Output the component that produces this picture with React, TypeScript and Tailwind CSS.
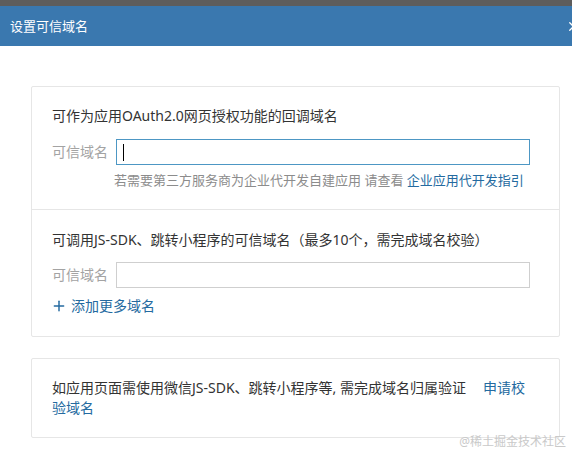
import React from "react";
import { Plus, X } from "lucide-react";

const font = { fontFamily: '"Noto Sans", "Noto Sans CJK SC", sans-serif' };

const DomainRow = ({ focused }: { focused?: boolean }) => {
  return (
    <div className="flex items-center">
      <span className="w-[64px] shrink-0 text-[14px] leading-[20px] text-[#a3a3a3]">可信域名</span>
      <div
        className={`flex h-[26px] w-[414px] items-center border bg-white pl-[6px] ${
          focused ? "border-[#4d97c4]" : "border-[#cfcfcf]"
        }`}
      >
        {focused && <div className="h-[17px] w-[1px] bg-black" />}
      </div>
    </div>
  );
};

export default function App() {
  return (
    <div className="relative h-[452px] w-[572px] overflow-hidden bg-white text-[#333]" style={font}>
      <div className="h-[6px] bg-[#5e5d5c]" />
      <div className="flex h-[40px] items-center bg-[#3a78af] pl-[10px] text-white">
        <span className="text-[13px] leading-[20px]">设置可信域名</span>
        <X size={15} strokeWidth={2} className="ml-auto mr-[-9px] shrink-0" />
      </div>

      <div className="px-[31px] pt-[40px]">
        <div className="w-[529px] rounded-[2px] border border-[#e6e6e6] bg-white">
          <div className="pl-[20px] pt-[19px] pb-[19px]">
            <p className="text-[14px] leading-[20px]">可作为应用OAuth2.0网页授权功能的回调域名</p>
            <div className="mt-[13px]">
              <DomainRow focused />
            </div>
            <p className="mt-[5px] ml-[62px] text-[13px] leading-[20px] text-[#8c8c8c]">
              若需要第三方服务商为企业代开发自建应用 请查看{" "}
              <a className="text-[#246aa0]">企业应用代开发指引</a>
            </p>
          </div>

          <div className="border-t border-[#e6e6e6] pl-[20px] pt-[20px] pb-[20px]">
            <p className="text-[14px] leading-[20px]">
              可调用JS-SDK、跳转小程序的可信域名（最多10个，需完成域名校验）
            </p>
            <div className="mt-[12px]">
              <DomainRow />
            </div>
            <div className="mt-[8px] flex items-center gap-[4px] text-[14px] leading-[20px] text-[#246aa0]">
              <Plus size={16} strokeWidth={2.2} className="-ml-[1px]" />
              <span>添加更多域名</span>
            </div>
          </div>
        </div>

        <div className="mt-[21px] w-[529px] rounded-[2px] border border-[#e6e6e6] bg-white pl-[20px] pt-[19px] pb-[19px]">
          <p className="text-[14px] leading-[20px]">
            如应用页面需使用微信JS-SDK、跳转小程序等, 需完成域名归属验证
            <a className="ml-[17px] text-[#246aa0]">
              申请校
              <br />
              验域名
            </a>
          </p>
        </div>
      </div>

      <span className="absolute right-[6px] bottom-[2px] text-[12px] leading-[16px] text-[#c9c9c9]">
        @稀土掘金技术社区
      </span>
    </div>
  );
}
